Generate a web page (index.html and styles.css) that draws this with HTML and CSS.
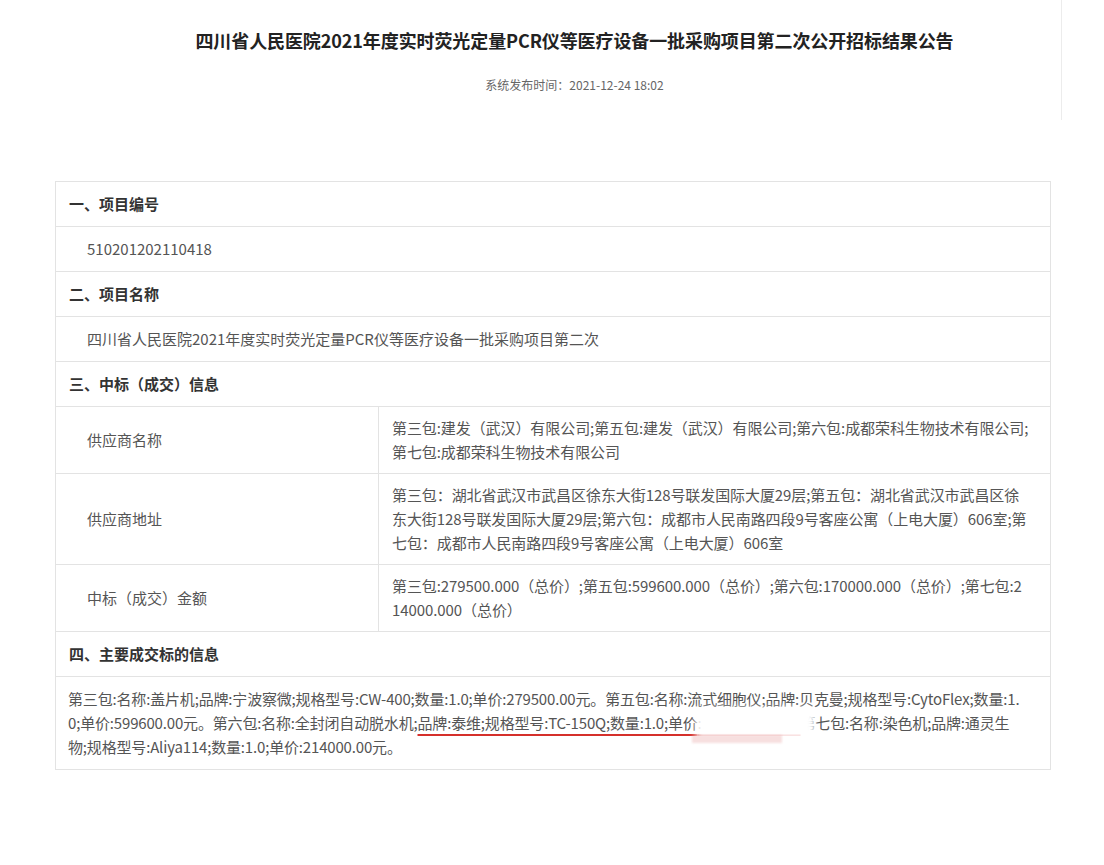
FILE: index.html
```html
<!DOCTYPE html>
<html lang="zh-CN">
<head>
<meta charset="UTF-8" />
<title>四川省人民医院2021年度实时荧光定量PCR仪等医疗设备一批采购项目第二次公开招标结果公告</title>
<link rel="stylesheet" href="styles.css">
</head>
<body>

<div class="cabecalho">
  <h1>四川省人民医院2021年度实时荧光定量PCR仪等医疗设备一批采购项目第二次公开招标结果公告</h1>
  <p class="data">系统发布时间：2021-12-24 18:02</p>
</div>

<table class="edital">
  <colgroup>
    <col class="col-rotulo">
    <col>
  </colgroup>
  <tr><th colspan="2">一、项目编号</th></tr>
  <tr><td colspan="2" class="valor">510201202110418</td></tr>
  <tr><th colspan="2">二、项目名称</th></tr>
  <tr><td colspan="2" class="valor">四川省人民医院2021年度实时荧光定量PCR仪等医疗设备一批采购项目第二次</td></tr>
  <tr><th colspan="2">三、中标（成交）信息</th></tr>
  <tr>
    <td class="rotulo">供应商名称</td>
    <td class="texto nome">第三包:建发（武汉）有限公司;第五包:建发（武汉）有限公司;第六包:成都荣科生物技术有限公司;第七包:成都荣科生物技术有限公司</td>
  </tr>
  <tr>
    <td class="rotulo">供应商地址</td>
    <td class="texto">第三包：湖北省武汉市武昌区徐东大街128号联发国际大厦29层;第五包：湖北省武汉市武昌区徐东大街128号联发国际大厦29层;第六包：成都市人民南路四段9号客座公寓（上电大厦）606室;第七包：成都市人民南路四段9号客座公寓（上电大厦）606室</td>
  </tr>
  <tr>
    <td class="rotulo">中标（成交）金额</td>
    <td class="texto">第三包:279500.000（总价）;第五包:599600.000（总价）;第六包:170000.000（总价）;第七包:214000.000（总价）</td>
  </tr>
  <tr><th colspan="2">四、主要成交标的信息</th></tr>
  <tr>
    <td colspan="2" class="paragrafo">第三包:名称:盖片机;品牌:宁波察微;规格型号:CW-400;数量:1.0;单价:279500.00元。第五包:名称:流式细胞仪;品牌:贝克曼;规格型号:CytoFlex;数量:1.0;单价:599600.00元。第六包:名称:全封闭自动脱水机;<span class="marcado">品牌:泰维;规格型号:TC-150Q;数量:1.0;单价<span class="censura">:170000.00元。</span></span>第七包:名称:染色机;品牌:通灵生物;规格型号:Aliya114;数量:1.0;单价:214000.00元。</td>
  </tr>
</table>

</body>
</html>
```

FILE: styles.css
```css
body {
  margin: 0;
  font-family: "Noto Sans CJK SC", "Noto Sans", sans-serif;
  background: #fff;
  color: #555;
}
.cabecalho {
  margin-left: 88px;
  width: 974px;
  height: 120px;
  box-sizing: border-box;
  padding-top: 28px;
  border-right: 1px solid #ececec;
  text-align: center;
}
h1 {
  margin: 0;
  font-size: 18px;
  line-height: 24px;
  font-weight: 700;
  color: #222;
  letter-spacing: -0.1px;
}
.data {
  margin: 24px 0 0;
  font-size: 12px;
  line-height: 18px;
  color: #666;
}
.edital {
  margin: 61px 0 0 55px;
  width: 996px;
  border-collapse: collapse;
  table-layout: fixed;
  font-size: 15px;
  line-height: 24px;
}
.col-rotulo {
  width: 323px;
}
.edital th, .edital td {
  border: 1px solid #e3e3e3;
  padding: 10px 13px;
  vertical-align: middle;
  text-align: left;
}
.edital th {
  font-weight: 700;
  color: #333;
}
.edital .valor, .edital .rotulo {
  padding-left: 31px;
}
.edital .texto {
  padding: 9px 22px 9px 13px;
  word-break: break-all;
  letter-spacing: -0.08px;
}
.edital .nome {
  padding-right: 14px;
}
.edital .paragrafo {
  padding: 10px 24px 10px 12px;
  word-break: break-all;
  letter-spacing: -0.17px;
}
.marcado {
  text-decoration: underline;
  text-decoration-color: #d5302b;
  text-decoration-thickness: 2px;
  text-underline-offset: 5px;
}
.censura {
  position: relative;
}
.censura::after {
  content: "";
  position: absolute;
  left: -2px;
  right: -14px;
  top: -4px;
  bottom: -6px;
  background: #fff;
  filter: blur(3px);
}
.censura::before {
  content: "";
  position: absolute;
  z-index: 1;
  left: -6px;
  width: 90px;
  bottom: -10px;
  height: 8px;
  background: rgba(230, 150, 150, 0.3);
  filter: blur(1px);
}
```
